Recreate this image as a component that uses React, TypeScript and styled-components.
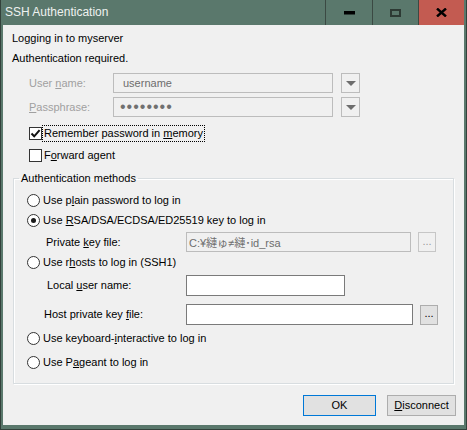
import React from 'react';
import styled, { createGlobalStyle, css } from 'styled-components';

const GlobalStyle = createGlobalStyle`
  html, body { margin: 0; padding: 0; background: #ffffff; }
  body {
    font-family: "Liberation Sans", "Noto Sans CJK JP", Arial, sans-serif;
    font-size: 11px;
    color: #000000;
  }
  * { box-sizing: border-box; }
`;

const Window = styled.div`
  width: 467px;
  height: 430px;
  background: #5a786c;
  border: 1px solid #33413b;
  border-top: none;
  padding: 0 2px 4px 2px;
  display: flex;
  flex-direction: column;
`;

const TitleBar = styled.div`
  height: 25px;
  display: flex;
  align-items: stretch;
`;

const TitleText = styled.div`
  flex: 1;
  display: flex;
  align-items: center;
  padding-left: 2px;
  padding-bottom: 1px;
  color: #eef2f0;
  font-size: 12px;
`;

const TitleButton = styled.div<{ $w: number; $close?: boolean }>`
  width: ${(p) => p.$w}px;
  border-left: 1px solid #3b4943;
  background: ${(p) => (p.$close ? '#c35b51' : 'transparent')};
  display: flex;
  align-items: center;
  justify-content: center;
`;

const Content = styled.div`
  flex: 1;
  background: #f0f0f0;
  display: flex;
  flex-direction: column;
`;

const InfoLine = styled.div<{ $mt: number }>`
  height: 16px;
  line-height: 16px;
  padding-left: 9px;
  margin-top: ${(p) => p.$mt}px;
`;

const FieldRow = styled.div<{ $mt: number }>`
  display: flex;
  align-items: center;
  padding-left: 26px;
  margin-top: ${(p) => p.$mt}px;
`;

const FieldLabel = styled.div<{ $w: number; $disabled?: boolean }>`
  width: ${(p) => p.$w}px;
  color: ${(p) => (p.$disabled ? '#a0a0a0' : '#000000')};
  padding-bottom: 1px;
`;

const TextBox = styled.div<{ $w: number; $h: number; $disabled?: boolean; $pl?: number }>`
  width: ${(p) => p.$w}px;
  height: ${(p) => p.$h}px;
  display: flex;
  align-items: center;
  padding-left: ${(p) => p.$pl ?? 2}px;
  white-space: nowrap;
  overflow: hidden;
  ${(p) =>
    p.$disabled
      ? css`
          background: #f0f0f0;
          border: 1px solid #bcbcbc;
          color: #6d6d6d;
        `
      : css`
          background: #ffffff;
          border: 1px solid #7a7a7a;
          color: #000000;
        `}
`;

const Dots = styled.span`
  font-size: 16px;
  line-height: 1;
  letter-spacing: 1px;
  color: #707070;
  padding-bottom: 1px;
`;

const DropButton = styled.div`
  width: 19px;
  height: 20px;
  margin-left: 8px;
  border: 1px solid #bcbcbc;
  background: #f0f0f0;
  display: flex;
  align-items: center;
  justify-content: center;
`;

const CheckRow = styled.div<{ $mt: number }>`
  height: 18px;
  display: flex;
  align-items: center;
  padding-left: 26px;
  margin-top: ${(p) => p.$mt}px;
`;

const CheckBox = styled.div`
  width: 13px;
  height: 13px;
  border: 1px solid #333333;
  background: #ffffff;
  margin-right: 1px;
  display: flex;
  align-items: center;
  justify-content: center;
`;

const CheckText = styled.span<{ $focus?: boolean }>`
  padding: 0 1px 1px 1px;
  line-height: 14px;
  ${(p) =>
    p.$focus &&
    css`
      outline: 1px dotted #000000;
      outline-offset: 0;
    `}
`;

const Group = styled.fieldset`
  margin: 7px 10px 0 10px;
  border: 1px solid #d8dde0;
  box-shadow: 1px 1px 0 #ffffff, inset 1px 1px 0 #ffffff;
  padding: 5px 0 11px 13px;
  min-width: 0;
`;

const GroupTitle = styled.legend`
  margin-left: -8px;
  padding: 0 2px;
  line-height: 14px;
  font-size: 11px;
`;

const RadioRow = styled.div<{ $mt?: number }>`
  height: 20px;
  display: flex;
  align-items: center;
  margin-top: ${(p) => p.$mt ?? 0}px;
`;

const Radio = styled.div<{ $checked?: boolean }>`
  width: 13px;
  height: 13px;
  border-radius: 50%;
  border: 1px solid #333333;
  background: #ffffff;
  margin-right: 3px;
  display: flex;
  align-items: center;
  justify-content: center;
  &::after {
    content: '';
    display: ${(p) => (p.$checked ? 'block' : 'none')};
    width: 5px;
    height: 5px;
    border-radius: 50%;
    background: #1a1a1a;
  }
`;

const SubRow = styled.div<{ $mt: number; $indent: number }>`
  display: flex;
  align-items: center;
  margin-top: ${(p) => p.$mt}px;
  padding-left: ${(p) => p.$indent}px;
`;

const BrowseButton = styled.div<{ $disabled?: boolean }>`
  width: 18px;
  height: 20px;
  margin-left: 7px;
  display: flex;
  align-items: center;
  justify-content: center;
  padding-bottom: 3px;
  font-size: 11px;
  ${(p) =>
    p.$disabled
      ? css`
          border: 1px solid #c6c6c6;
          background: #f0f0f0;
          color: #9a9a9a;
        `
      : css`
          border: 1px solid #adadad;
          background: #e1e1e1;
          color: #000000;
        `}
`;

const ButtonBar = styled.div`
  display: flex;
  justify-content: flex-end;
  gap: 11px;
  padding-right: 8px;
  margin-top: 11px;
`;

const DialogButton = styled.div<{ $w: number; $default?: boolean }>`
  width: ${(p) => p.$w}px;
  height: 21px;
  background: #e1e1e1;
  border: 1px solid ${(p) => (p.$default ? '#0078d7' : '#adadad')};
  display: flex;
  align-items: center;
  justify-content: center;
  padding-bottom: 1px;
`;

const Arrow = () => (
  <svg width="10" height="5" viewBox="0 0 10 5">
    <polygon points="0,0 10,0 5,5" fill="#6d6d6d" />
  </svg>
);

const Check = () => (
  <svg width="11" height="11" viewBox="0 0 11 11">
    <path d="M1.5 5.5 L4.2 8.3 L9.6 2.2" stroke="#111" strokeWidth="2" fill="none" />
  </svg>
);

export default function App() {
  return (
    <>
      <GlobalStyle />
      <Window>
        <TitleBar>
          <TitleText>SSH Authentication</TitleText>
          <TitleButton $w={47}>
            <svg width="11" height="4" viewBox="0 0 11 4">
              <rect x="0" y="0" width="11" height="3.5" fill="#000" />
            </svg>
          </TitleButton>
          <TitleButton $w={46}>
            <svg width="11" height="8" viewBox="0 0 11 8">
              <rect x="1" y="1" width="9" height="6" fill="none" stroke="#2d3a34" strokeWidth="2" />
            </svg>
          </TitleButton>
          <TitleButton $w={46} $close>
            <svg width="11" height="9" viewBox="0 0 11 9">
              <path d="M1 0.5 L10 8.5 M10 0.5 L1 8.5" stroke="#000" strokeWidth="2.4" />
            </svg>
          </TitleButton>
        </TitleBar>
        <Content>
          <InfoLine $mt={5}>Logging in to myserver</InfoLine>
          <InfoLine $mt={4}>Authentication required.</InfoLine>

          <FieldRow $mt={7}>
            <FieldLabel $w={84} $disabled>
              User <u>n</u>ame:
            </FieldLabel>
            <TextBox $w={220} $h={20} $disabled $pl={9}>
              username
            </TextBox>
            <DropButton>
              <Arrow />
            </DropButton>
          </FieldRow>
          <FieldRow $mt={4}>
            <FieldLabel $w={84} $disabled>
              <u>P</u>assphrase:
            </FieldLabel>
            <TextBox $w={220} $h={20} $disabled $pl={6}>
              <Dots>••••••••</Dots>
            </TextBox>
            <DropButton>
              <Arrow />
            </DropButton>
          </FieldRow>

          <CheckRow $mt={7}>
            <CheckBox>
              <Check />
            </CheckBox>
            <CheckText $focus>
              Remember password in <u>m</u>emory
            </CheckText>
          </CheckRow>
          <CheckRow $mt={4}>
            <CheckBox />
            <CheckText>
              F<u>o</u>rward agent
            </CheckText>
          </CheckRow>

          <Group>
            <GroupTitle>Authentication methods</GroupTitle>
            <RadioRow>
              <Radio />
              <span>
                Use p<u>l</u>ain password to log in
              </span>
            </RadioRow>
            <RadioRow>
              <Radio $checked />
              <span>
                Use <u>R</u>SA/DSA/ECDSA/ED25519 key to log in
              </span>
            </RadioRow>
            <SubRow $mt={2} $indent={19}>
              <FieldLabel $w={140}>
                Private <u>k</u>ey file:
              </FieldLabel>
              <TextBox $w={225} $h={20} $disabled $pl={2}>
                C:¥縺ゅ≠縺･id_rsa
              </TextBox>
              <BrowseButton $disabled>...</BrowseButton>
            </SubRow>
            <RadioRow>
              <Radio />
              <span>
                Use r<u>h</u>osts to log in (SSH1)
              </span>
            </RadioRow>
            <SubRow $mt={3} $indent={20}>
              <FieldLabel $w={139}>
                Local <u>u</u>ser name:
              </FieldLabel>
              <TextBox $w={159} $h={21} />
            </SubRow>
            <SubRow $mt={8} $indent={17}>
              <FieldLabel $w={142}>
                Host private key <u>f</u>ile:
              </FieldLabel>
              <TextBox $w={227} $h={21} />
              <BrowseButton>...</BrowseButton>
            </SubRow>
            <RadioRow $mt={3}>
              <Radio />
              <span>
                Use keyboard-<u>i</u>nteractive to log in
              </span>
            </RadioRow>
            <RadioRow $mt={4}>
              <Radio />
              <span>
                Use P<u>a</u>geant to log in
              </span>
            </RadioRow>
          </Group>

          <ButtonBar>
            <DialogButton $w={73} $default>
              OK
            </DialogButton>
            <DialogButton $w={69}>
              <span>
                <u>D</u>isconnect
              </span>
            </DialogButton>
          </ButtonBar>
        </Content>
      </Window>
    </>
  );
}
